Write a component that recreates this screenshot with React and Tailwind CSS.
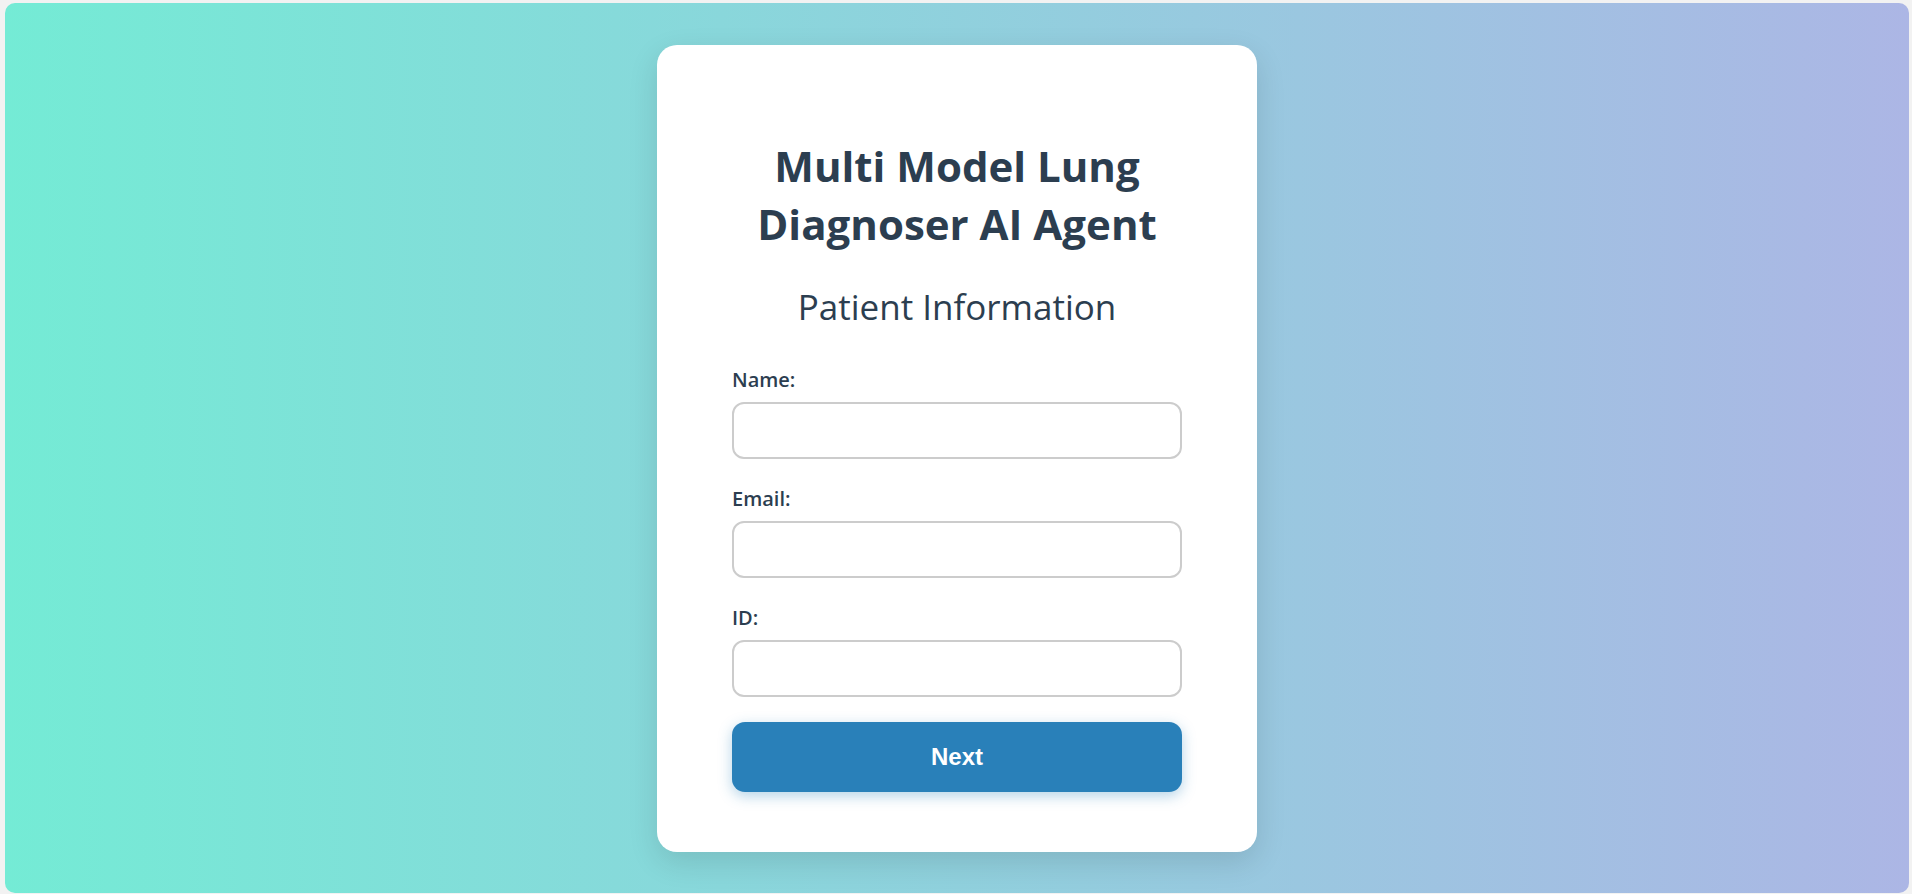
export default function App() {
  return (
    <div className="w-[1912px] h-[894px] bg-[#f2f2f2] pl-[5px] pr-[3px] pt-[3px] pb-[1px]">
      <div className="w-full h-full rounded-[10px] bg-[linear-gradient(to_right,#74ebd5,#acb6e5)] flex items-center justify-center">
        <div
          className="w-[600px] bg-white rounded-[20px] shadow-[0_10px_30px_rgba(0,0,0,0.12)] px-[75px] pt-[92px] pb-[60px]"
          style={{ fontFamily: "'Open Sans', 'Noto Sans', sans-serif" }}
        >
          <h1 className="text-center text-[42px] leading-[58px] font-bold text-[#2c3e50]">
            Multi Model Lung
            <br />
            Diagnoser AI Agent
          </h1>
          <h2 className="mt-[32px] text-center text-[35px] leading-[44px] font-normal text-[#2c3e50]">
            Patient Information
          </h2>
          <form className="mt-[39px] flex flex-col" onSubmit={(e) => e.preventDefault()}>
            {["Name:", "Email:", "ID:"].map((l, i) => (
              <div key={l} className={i === 0 ? "" : "mt-[28px]"}>
                <label className="block text-[20px] leading-[24px] font-semibold text-[#2c3e50]">{l}</label>
                <input
                  type="text"
                  className="mt-[10px] block w-full h-[57px] rounded-[12px] border-2 border-[#cccccc] bg-white outline-none px-3"
                />
              </div>
            ))}
            <button
              type="submit"
              className="mt-[25px] h-[70px] w-full rounded-[13px] bg-[#2980b9] text-white text-[24px] font-bold shadow-[0_4px_14px_rgba(41,128,185,0.35)]"
              style={{ fontFamily: "'Liberation Sans', Arial, sans-serif" }}
            >
              Next
            </button>
          </form>
        </div>
      </div>
    </div>
  );
}
